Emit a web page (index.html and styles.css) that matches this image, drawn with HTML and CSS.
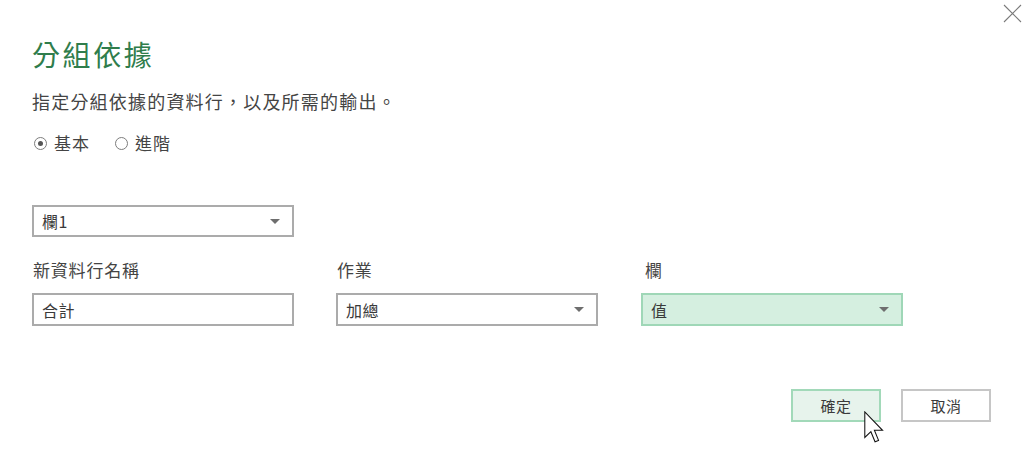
FILE: index.html
```html
<!DOCTYPE html>
<html lang="zh-Hant">
<head>
<meta charset="utf-8">
<title>分組依據</title>
<link rel="stylesheet" href="styles.css">
</head>
<body>
<div class="dialog">
  <button class="close" aria-label="關閉">
    <svg width="19" height="19" viewBox="0 0 19 19"><path d="M1 1 L18 18 M18 1 L1 18" stroke="#7a7a7a" stroke-width="1.1" fill="none"/></svg>
  </button>
  <h1 class="title">分組依據</h1>
  <p class="subtitle">指定分組依據的資料行，以及所需的輸出。</p>
  <div class="radios">
    <label class="radio"><span class="circle checked"></span>基本</label>
    <label class="radio"><span class="circle"></span>進階</label>
  </div>
  <div class="select group-select"><span>欄1</span><span class="caret"></span></div>
  <div class="grid">
    <div class="field">
      <div class="label">新資料行名稱</div>
      <div class="input">合計</div>
    </div>
    <div class="field">
      <div class="label">作業</div>
      <div class="select"><span>加總</span><span class="caret"></span></div>
    </div>
    <div class="field">
      <div class="label l3">欄</div>
      <div class="select active"><span>值</span><span class="caret"></span></div>
    </div>
  </div>
  <div class="actions">
    <button class="btn ok">確定</button>
    <button class="btn">取消</button>
  </div>
  <svg class="cursor" width="20" height="33" viewBox="0 0 12.5 20.5">
    <path d="M0.5 0.5 V16.5 L4.3 12.9 L6.9 19.2 L9.1 18.3 L6.5 12 H11.6 Z" fill="#fff" stroke="#111" stroke-width="0.65" stroke-linejoin="miter"/>
  </svg>
</div>
</body>
</html>
```
FILE: styles.css
```css
* { box-sizing: border-box; }
html, body { margin: 0; padding: 0; background: #fff; }
body {
  font-family: "Noto Sans CJK TC", "Noto Sans", sans-serif;
  color: #444;
  width: 1030px;
  height: 459px;
  overflow: hidden;
}
.dialog {
  position: relative;
  padding: 38px 39px 0 32px;
  height: 459px;
}
.close {
  position: absolute;
  top: 4px;
  right: 8px;
  border: 0;
  background: none;
  padding: 0;
  width: 19px;
  height: 19px;
}
.close svg { display: block; }
.title {
  margin: 0;
  font-weight: 400;
  font-size: 28px;
  line-height: 32px;
  letter-spacing: 2.6px;
  color: #2f7d4c;
}
.subtitle {
  margin: 19px 0 0;
  font-size: 18px;
  line-height: 24px;
  letter-spacing: 1.2px;
}
.radios {
  margin-top: 18px;
  display: flex;
  gap: 23px;
  height: 24px;
  align-items: center;
}
.radio {
  display: flex;
  align-items: center;
  font-size: 17px;
  letter-spacing: 1px;
  line-height: 24px;
}
.circle {
  width: 13px;
  height: 13px;
  border: 1px solid #7d7d7d;
  border-radius: 50%;
  margin: 0 7px 0 2px;
  display: flex;
  align-items: center;
  justify-content: center;
}
.circle.checked::after {
  content: "";
  width: 5px;
  height: 5px;
  border-radius: 50%;
  background: #555;
}
.select, .input {
  width: 262px;
  height: 33px;
  border: 2px solid #ababab;
  background: #fff;
  display: flex;
  align-items: center;
  justify-content: space-between;
  padding: 0 12px 0 8px;
  font-size: 16px;
  letter-spacing: 0.5px;
  color: #3a3a3a;
}
.group-select {
  margin-top: 50px;
  height: 32px;
}
.caret {
  width: 0;
  height: 0;
  border-left: 5px solid transparent;
  border-right: 5px solid transparent;
  border-top: 5px solid #6e6e6e;
}
.grid {
  margin-top: 21px;
  display: grid;
  grid-template-columns: 304px 305px 262px;
}
.label {
  font-size: 17px;
  letter-spacing: 0.8px;
  line-height: 24px;
  padding-left: 1px;
  margin-bottom: 11px;
}
.label.l3 { padding-left: 4px; }
.select.active {
  background: #d5efe0;
  border-color: #9fd7b7;
}
.actions {
  margin-top: 63px;
  display: flex;
  justify-content: flex-end;
  gap: 20px;
}
.btn {
  width: 90px;
  height: 33px;
  border: 2px solid #c6c6c6;
  background: #fff;
  font-family: "Noto Sans CJK TC", "Noto Sans", sans-serif;
  font-size: 15px;
  letter-spacing: 0.5px;
  color: #3a3a3a;
  padding: 0;
}
.btn.ok {
  background: #e7f3ec;
  border-color: #a2d9b9;
}
.cursor {
  position: absolute;
  left: 864px;
  top: 411px;
}
```
